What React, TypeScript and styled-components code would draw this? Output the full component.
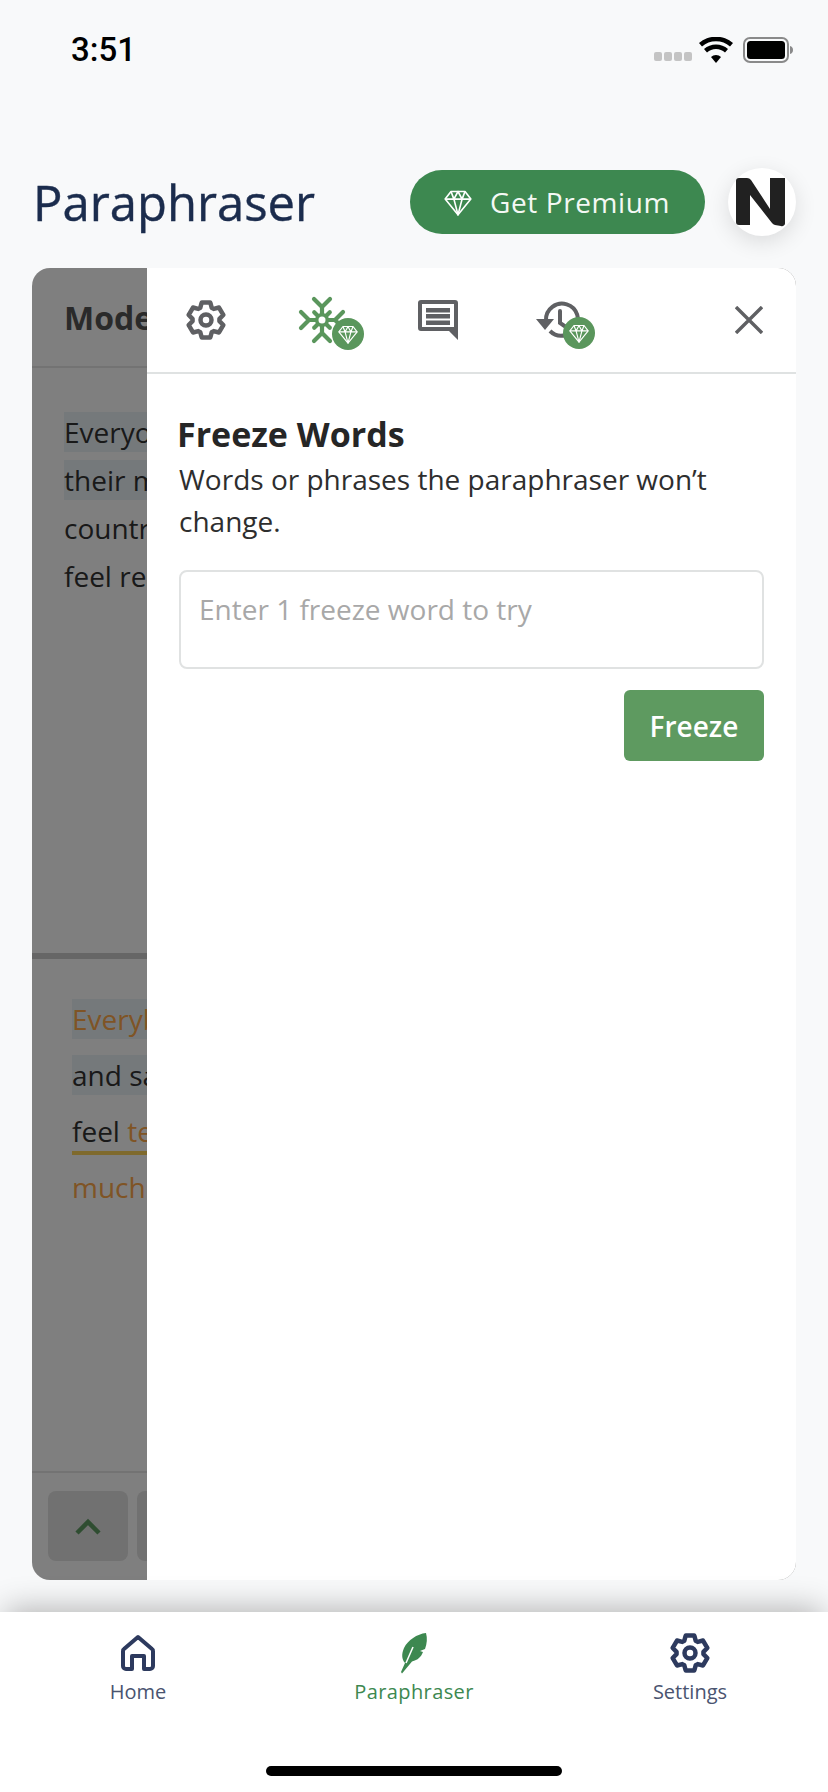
import React from "react";
import styled, { createGlobalStyle } from "styled-components";

const GlobalStyle = createGlobalStyle`
  html, body {
    margin: 0;
    padding: 0;
    background: #f8f9fa;
  }
  * {
    box-sizing: border-box;
  }
`;

const Screen = styled.div`
  width: 828px;
  height: 1792px;
  display: flex;
  flex-direction: column;
  overflow: hidden;
  background: #f8f9fa;
  font-family: "Open Sans", sans-serif;
`;

const StatusBar = styled.div`
  height: 100px;
  flex: none;
  display: flex;
  align-items: flex-start;
  justify-content: space-between;
  padding: 32px 35px 0 71px;
`;

const Clock = styled.span`
  font-family: Roboto, "Liberation Sans", sans-serif;
  font-weight: 500;
  font-size: 33px;
  line-height: 36px;
  color: #000;
`;

const StatusIcons = styled.div`
  display: flex;
  align-items: center;
  gap: 7px;
  padding-top: 5px;
`;

const SignalDots = styled.div`
  display: flex;
  gap: 2px;
  padding-top: 13px;
`;

const SignalDot = styled.span`
  width: 8px;
  height: 9px;
  border-radius: 2px;
  background: #c4c4c4;
`;

const Header = styled.header`
  height: 168px;
  flex: none;
  display: flex;
  align-items: flex-start;
  padding: 68px 32px 0 33px;
`;

const Title = styled.h1`
  flex: 1;
  margin: 0;
  font-size: 49px;
  line-height: 68px;
  font-weight: 500;
  -webkit-text-stroke: 0.4px #1b2c4d;
  color: #1b2c4d;
`;

const PremiumButton = styled.button`
  width: 295px;
  height: 64px;
  margin-top: 2px;
  display: flex;
  align-items: center;
  gap: 18px;
  padding: 0 0 0 34px;
  border: 0;
  border-radius: 32px;
  background: #3d8850;
  color: #f4f8f4;
  font-family: inherit;
  font-size: 28px;
  letter-spacing: 0.6px;
`;

const Avatar = styled.div`
  width: 68px;
  height: 68px;
  flex: none;
  margin-left: 23px;
  padding-right: 4px;
  display: flex;
  align-items: center;
  justify-content: center;
  border-radius: 50%;
  background: #fff;
  box-shadow: 0 6px 22px rgba(0, 0, 0, 0.12);
`;

const Card = styled.main`
  position: relative;
  height: 1312px;
  flex: none;
  margin: 0 32px;
  display: flex;
  flex-direction: column;
  overflow: hidden;
  border-radius: 18px;
  background: #fff;
`;

const ModeRow = styled.div`
  height: 100px;
  flex: none;
  padding: 30px 32px 0;
  border-bottom: 2px solid #e6e6e6;
  font-size: 32px;
  line-height: 40px;
  font-weight: 700;
  color: #555;
`;

const InputPane = styled.section`
  height: 591px;
  flex: none;
  padding: 44px 0 0 32px;
  border-bottom: 6px solid #ccc;
`;

const OutputPane = styled.section`
  flex: 1;
  padding: 40px 0 0 40px;
  border-bottom: 2px solid #e6e6e6;
`;

const TextLine = styled.div<{ $spacing: number }>`
  height: ${(p) => p.$spacing}px;
  white-space: nowrap;
  font-size: 28px;
  line-height: 40px;
  color: #333;
`;

const Highlight = styled.span`
  display: inline-block;
  background: #ebf3f7;
`;

const Changed = styled.span`
  color: #ffa94a;
`;

const Underlined = styled.span`
  display: inline-block;
  border-bottom: 4px solid #ffd45a;
`;

const ActionRow = styled.div`
  height: 107px;
  flex: none;
  display: flex;
  gap: 9px;
  padding: 18px 0 0 16px;
`;

const ActionButton = styled.div`
  width: 80px;
  height: 70px;
  flex: none;
  display: flex;
  align-items: center;
  justify-content: center;
  border-radius: 8px;
  background: #e2e2e2;
`;

const Scrim = styled.div`
  position: absolute;
  inset: 0;
  background: rgba(0, 0, 0, 0.5);
`;

const Panel = styled.aside`
  position: absolute;
  top: 0;
  right: 0;
  bottom: 0;
  left: 115px;
  display: flex;
  flex-direction: column;
  background: #fff;
`;

const Toolbar = styled.div`
  height: 106px;
  flex: none;
  display: flex;
  align-items: center;
  padding: 0 33px 0 1px;
  border-bottom: 2px solid #dfe2e2;
`;

const ToolButton = styled.div`
  position: relative;
  width: 116px;
  height: 60px;
  display: flex;
  align-items: center;
  justify-content: center;
`;

const CloseButton = styled.div`
  margin-left: auto;
  display: flex;
`;

const Badge = styled.span<{ $x: number; $y: number }>`
  position: absolute;
  left: ${(p) => p.$x}px;
  top: ${(p) => p.$y}px;
  width: 32px;
  height: 32px;
  display: flex;
  align-items: center;
  justify-content: center;
  border-radius: 50%;
  background: #5a965c;
`;

const PanelBody = styled.div`
  padding: 38px 32px 0 32px;
`;

const PanelTitle = styled.h2`
  margin: 0 0 2px -2px;
  font-size: 34px;
  line-height: 44px;
  font-weight: 700;
  color: #262626;
`;

const PanelText = styled.p`
  margin: 0;
  font-size: 28px;
  line-height: 42px;
  color: #2e2e2e;
`;

const FreezeInput = styled.textarea`
  display: block;
  width: 100%;
  height: 99px;
  margin-top: 28px;
  padding: 18px 18px 0;
  resize: none;
  border: 2px solid #e0e2e2;
  border-radius: 8px;
  background: #fff;
  font-family: inherit;
  font-size: 28px;
  line-height: 38px;
  &::placeholder {
    color: #a8a8a8;
    opacity: 1;
  }
`;

const FormActions = styled.div`
  display: flex;
  justify-content: flex-end;
  margin-top: 21px;
`;

const FreezeButton = styled.button`
  width: 140px;
  height: 71px;
  border: 0;
  border-radius: 6px;
  background: #5e9a60;
  color: #fff;
  font-family: inherit;
  font-size: 28px;
  font-weight: 600;
`;

const TabBar = styled.nav`
  position: relative;
  flex: 1;
  margin-top: 32px;
  display: grid;
  grid-template-columns: repeat(3, 1fr);
  align-content: start;
  padding-top: 16px;
  background: #fff;
  box-shadow: 0 -8px 30px -6px rgba(0, 0, 0, 0.3);
`;

const Tab = styled.div<{ $active?: boolean }>`
  display: flex;
  flex-direction: column;
  align-items: center;
  height: 78px;
  font-size: 20px;
  line-height: 28px;
  font-weight: ${(p) => (p.$active ? 500 : 400)};
  letter-spacing: ${(p) => (p.$active ? "0.4px" : "0")};
  color: ${(p) => (p.$active ? "#3d8850" : "#4a5470")};
`;

const TabIcon = styled.div`
  height: 50px;
  display: flex;
  align-items: center;
  justify-content: center;
`;

const HomeIndicator = styled.div`
  position: absolute;
  left: 266px;
  bottom: 16px;
  width: 296px;
  height: 10px;
  border-radius: 5px;
  background: #000;
`;

function gearPath(cx: number, cy: number, outer: number, inner: number) {
  const points: string[] = [];
  for (let i = 0; i < 6; i++) {
    const a = (i * Math.PI) / 3 - Math.PI / 2;
    const steps: [number, number][] = [
      [inner, -0.44],
      [outer, -0.24],
      [outer, 0.24],
      [inner, 0.44],
    ];
    steps.forEach(([r, d]) => {
      points.push(`${(cx + r * Math.cos(a + d)).toFixed(2)} ${(cy + r * Math.sin(a + d)).toFixed(2)}`);
    });
  }
  return `M${points.join("L")}Z`;
}

function Gear({ color, size }: { color: string; size: number }) {
  return (
    <svg width={size} height={size} viewBox="0 0 40 40" fill="none" stroke={color} strokeWidth="4.5" strokeLinejoin="round">
      <path d={gearPath(20, 20, 18, 13.5)} />
      <circle cx="20" cy="20" r="5.5" />
    </svg>
  );
}

function Diamond({ size, strokeWidth = 1.4 }: { size: number; strokeWidth?: number }) {
  return (
    <svg width={size} height={size} viewBox="0 0 24 24" fill="none" stroke="#fff" strokeWidth={strokeWidth} strokeLinejoin="round">
      <path d="M6 3h12l5 6.5L12 23 1 9.5z" />
      <path d="M1 9.5h22M6 3l2.5 6.5L12 3l3.5 6.5L18 3M8.5 9.5 12 23l3.5-13.5" />
    </svg>
  );
}

function Snowflake() {
  const arm = "M24 24V11M24 11l-8-8M24 11l8-8";
  return (
    <svg width="48" height="48" viewBox="0 0 48 48" fill="none" stroke="#5a965c" strokeWidth="4.200" strokeLinecap="round">
      {[0, 90, 180, 270].map((r) => (
        <path key={r} d={arm} transform={`rotate(${r} 24 24)`} />
      ))}
      {[45, 135, 225, 315].map((r) => (
        <path key={r} d="M24 24V13" transform={`rotate(${r} 24 24)`} />
      ))}
      <circle cx="24" cy="24" r="7" fill="#5a965c" stroke="none" />
      <circle cx="24" cy="24" r="3.500" fill="#fff" stroke="none" />
    </svg>
  );
}

function Chat() {
  return (
    <svg width="42" height="42" viewBox="0 0 42 42">
      <path fill="#5f6063" d="M4 1h34a3 3 0 0 1 3 3v37l-9-9H4a3 3 0 0 1-3-3V4a3 3 0 0 1 3-3z" />
      <path fill="#fff" d="M5 5h32v23H5z" />
      <path fill="#5f6063" d="M9 9h24v4.500H9zM9 15h24v4.500H9zM9 21.500h24v4.500H9z" />
    </svg>
  );
}

function History() {
  return (
    <svg width="48" height="48" viewBox="0 0 48 48" fill="none" stroke="#5f6063" strokeWidth="4" style={{ marginLeft: 10 }}>
      <path d="M11 24a16 16 0 1 1 29 9M15 35a16 16 0 0 0 16 4" />
      <path d="M25 15v12l6 4" strokeLinecap="round" />
      <path fill="#5f6063" stroke="none" d="M1 23h18l-9 11z" />
    </svg>
  );
}

function Feather() {
  return (
    <svg width="28" height="44" viewBox="0 0 28 42">
      <path
        fill="#3d8850"
        d="M26 1c1.500 5 1 11-1 16l-5 2 3 1c-2 5-5 8-11 9.500L2 41.500 1 40l4-9C1.500 27 1.500 22 4 16 8 8 17 2 26 1z"
      />
      <path fill="none" stroke="#fff" strokeWidth="1.600" d="M13 15 6 31" />
    </svg>
  );
}

function HomeGlyph() {
  return (
    <svg width="36" height="38" viewBox="0 0 36 38" fill="none" stroke="#2d3a5e" strokeWidth="4" strokeLinejoin="round">
      <path d="M18 3 4 15a2 2 0 0 0-1 2v15a3 3 0 0 0 3 3h6V22h12v13h6a3 3 0 0 0 3-3V17a2 2 0 0 0-1-2z" />
    </svg>
  );
}

function LogoN() {
  return (
    <svg width="50" height="52" viewBox="0 0 50 50">
      <path
        fill="#212121"
        d="M1 4a3 3 0 0 1 3-3h8a5 5 0 0 1 4 2l19 29V1h15v45a3 3 0 0 1-4 3l-6-1a5 5 0 0 1-3-2L15 18v30H4a3 3 0 0 1-3-3z"
      />
    </svg>
  );
}

const inputLines = ["Everyone has their own", "their mother tongue and", "country where they can", "feel really at home"];

export default function App() {
  return (
    <Screen>
      <GlobalStyle />
      <StatusBar>
        <Clock>3:51</Clock>
        <StatusIcons>
          <SignalDots>
            {[0, 1, 2, 3].map((d) => (
              <SignalDot key={d} />
            ))}
          </SignalDots>
          <svg width="34" height="26" viewBox="0 0 34 26">
            <path d="M17 26l-5-6a7 7 0 0 1 10 0z" />
            <path d="M8 15.500a13 13 0 0 1 18 0l3-3.500a18 18 0 0 0-24 0z" />
            <path d="M3 9.500a21 21 0 0 1 28 0l3-3.500a26 26 0 0 0-34 0z" />
          </svg>
          <svg width="50" height="26" viewBox="0 0 50 26" style={{ marginLeft: 3 }}>
            <rect x="1" y="1" width="44" height="24" rx="6" fill="none" stroke="#8a8a8a" strokeWidth="2" />
            <rect x="4" y="4" width="38" height="18" rx="3.500" fill="#000" />
            <path d="M47 9c2 .5 3 2 3 4s-1 3.500-3 4z" fill="#8a8a8a" />
          </svg>
        </StatusIcons>
      </StatusBar>

      <Header>
        <Title>Paraphraser</Title>
        <PremiumButton>
          <Diamond size={28} />
          Get Premium
        </PremiumButton>
        <Avatar>
          <LogoN />
        </Avatar>
      </Header>

      <Card>
        <ModeRow>Modes</ModeRow>
        <InputPane>
          {inputLines.map((line, i) => (
            <TextLine key={line} $spacing={48}>
              {i < 2 ? <Highlight>{line}</Highlight> : line}
            </TextLine>
          ))}
        </InputPane>
        <OutputPane>
          <TextLine $spacing={56}>
            <Highlight>
              <Changed>Everybody has</Changed> their own
            </Highlight>
          </TextLine>
          <TextLine $spacing={56}>
            <Highlight>and says what they want</Highlight>
          </TextLine>
          <TextLine $spacing={56}>
            <Underlined>
              feel <Changed>terribly</Changed>
            </Underlined>
          </TextLine>
          <TextLine $spacing={56}>
            <Changed>much at home</Changed>
          </TextLine>
        </OutputPane>
        <ActionRow>
          <ActionButton>
            <svg width="26" height="17" viewBox="0 0 26 17" fill="none" stroke="#5f9a62" strokeWidth="4.500">
              <path d="M2 15 13 4l11 11" />
            </svg>
          </ActionButton>
          <ActionButton />
        </ActionRow>

        <Scrim />

        <Panel>
          <Toolbar>
            <ToolButton>
              <Gear color="#5f6063" size={40} />
            </ToolButton>
            <ToolButton>
              <Snowflake />
              <Badge $x={68} $y={28}>
                <Diamond size={20} />
              </Badge>
            </ToolButton>
            <ToolButton>
              <Chat />
            </ToolButton>
            <ToolButton>
              <History />
              <Badge $x={67} $y={27}>
                <Diamond size={20} />
              </Badge>
            </ToolButton>
            <CloseButton>
              <svg width="28" height="28" viewBox="0 0 28 28" fill="none" stroke="#5f6063" strokeWidth="3.400">
                <path d="M1 1l26 26M27 1 1 27" />
              </svg>
            </CloseButton>
          </Toolbar>
          <PanelBody>
            <PanelTitle>Freeze Words</PanelTitle>
            <PanelText>Words or phrases the paraphraser won’t change.</PanelText>
            <FreezeInput placeholder="Enter 1 freeze word to try" rows={2} />
            <FormActions>
              <FreezeButton>Freeze</FreezeButton>
            </FormActions>
          </PanelBody>
        </Panel>
      </Card>

      <TabBar>
        <Tab>
          <TabIcon>
            <HomeGlyph />
          </TabIcon>
          Home
        </Tab>
        <Tab $active>
          <TabIcon>
            <Feather />
          </TabIcon>
          Paraphraser
        </Tab>
        <Tab>
          <TabIcon>
            <Gear color="#2d3a5e" size={40} />
          </TabIcon>
          Settings
        </Tab>
        <HomeIndicator />
      </TabBar>
    </Screen>
  );
}
